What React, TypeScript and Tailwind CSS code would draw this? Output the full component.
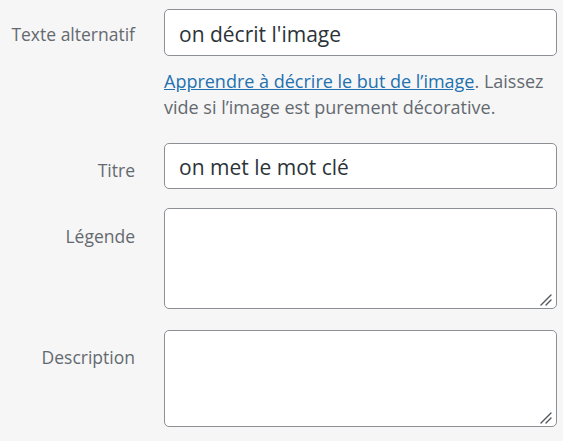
import React from 'react';

const font = { fontFamily: '"Open Sans", "Noto Sans", sans-serif' };

function Label({ children, pt }: { children: React.ReactNode; pt: string }) {
  return (
    <label className={`w-[135px] shrink-0 text-right text-[17.5px] leading-[22px] text-[#646970] ${pt}`}>
      {children}
    </label>
  );
}

function Area({ h }: { h: string }) {
  return (
    <div className="relative flex-1 flex">
      <textarea className={`flex-1 ${h} resize-none rounded-[5px] border border-[#8c8f94] bg-white outline-none`} />
      {/* resize grip */}
      <svg className="absolute right-[5px] bottom-[3px] w-[12px] h-[12px] pointer-events-none" viewBox="0 0 12 12">
        <path d="M1 11L11 1M6 11L11 6" stroke="#50575e" strokeWidth="1.4" strokeLinecap="round" />
      </svg>
    </div>
  );
}

export default function App() {
  return (
    <div className="w-[563px] h-[441px] bg-[#f6f6f6] overflow-hidden" style={font}>
      <div className="flex flex-col pt-[9px] pr-[6px]">
        {/* Texte alternatif */}
        <div className="flex gap-[29px]">
          <Label pt="pt-[14px]">Texte alternatif</Label>
          <div className="flex-1 flex flex-col">
            <input
              className="h-[47px] w-full rounded-[5px] border border-[#8c8f94] bg-white px-[14px] pt-[2px] text-[21px] text-[#2c3338] outline-none"
              defaultValue="on décrit l'image"
            />
            <p className="mt-[12px] text-[18px] leading-[26px] text-[#646970]">
              <a href="#" className="text-[#2271b1] underline">Apprendre à décrire le but de l’image</a>. Laissez vide si l’image est purement décorative.
            </p>
          </div>
        </div>

        {/* Titre */}
        <div className="flex gap-[29px] mt-[23px]">
          <Label pt="pt-[16px]">Titre</Label>
          <input
            className="flex-1 h-[46px] rounded-[5px] border border-[#8c8f94] bg-white px-[14px] pt-[2px] text-[21px] text-[#2c3338] outline-none"
            defaultValue="on met le mot clé"
          />
        </div>

        {/* Légende */}
        <div className="flex gap-[29px] mt-[19px]">
          <Label pt="pt-[17px]">Légende</Label>
          <Area h="h-[101px]" />
        </div>

        {/* Description */}
        <div className="flex gap-[29px] mt-[21px]">
          <Label pt="pt-[16px]">Description</Label>
          <Area h="h-[97px]" />
        </div>
      </div>
    </div>
  );
}
